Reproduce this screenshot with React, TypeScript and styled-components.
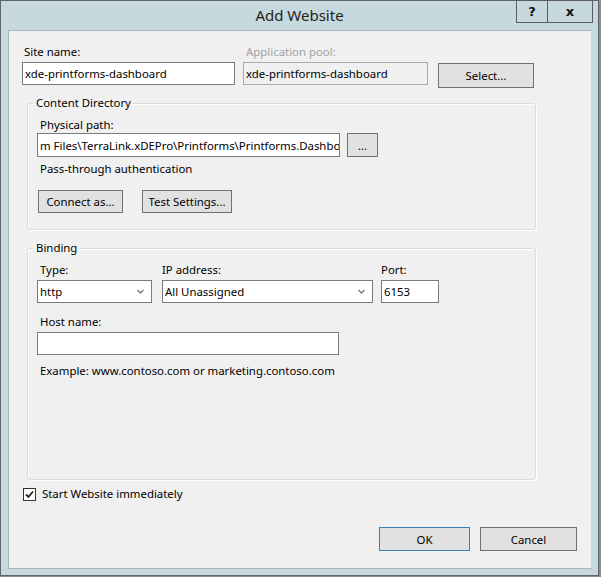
import React from 'react';
import styled, { createGlobalStyle } from 'styled-components';

const GlobalStyle = createGlobalStyle`
  html, body {
    margin: 0;
    padding: 0;
    background: #8c8c8c;
  }
  body {
    font-family: "Noto Sans", "Open Sans", sans-serif;
    font-size: 11.4px;
    color: #000;
  }
`;

const Window = styled.div`
  width: 597px;
  height: 574px;
  border: 1px solid #5f6569;
  background: #c6d9de;
  display: flex;
  flex-direction: column;
`;

const TitleBar = styled.div`
  height: 29px;
  display: grid;
  grid-template-columns: 1fr auto 1fr;
  align-items: start;
`;

const Title = styled.div`
  font-size: 15px;
  line-height: 29px;
  color: #1e1e1e;
`;

const CaptionButtons = styled.div`
  justify-self: end;
  display: flex;
  margin-right: 5px;
  margin-top: -1px;
`;

const CaptionButton = styled.div<{ $w: number }>`
  width: ${(p) => p.$w}px;
  height: 21px;
  border: 1px solid #5a5e61;
  border-left-width: ${(p) => (p.$w > 35 ? 0 : 1)}px;
  display: flex;
  align-items: center;
  justify-content: center;
  font-family: "DejaVu Sans", sans-serif;
  font-weight: bold;
  font-size: 13px;
  color: #111;
`;

const Panel = styled.div`
  flex: 1;
  margin: 0 6px 6px 7px;
  background: #f0f0f0;
  border: 1px solid #a7b7bd;
  border-right-color: #c6d9de;
  padding: 13px 14px 0 13px;
  display: flex;
  flex-direction: column;
`;

const Row = styled.div<{ $gap?: number }>`
  display: flex;
  align-items: flex-start;
  gap: ${(p) => p.$gap ?? 8}px;
`;

const Field = styled.div<{ $w: number }>`
  width: ${(p) => p.$w}px;
  display: flex;
  flex-direction: column;
`;

const Label = styled.div<{ $indent?: number; $muted?: boolean }>`
  line-height: 16px;
  padding-left: ${(p) => p.$indent ?? 3}px;
  color: ${(p) => (p.$muted ? '#a3a3a3' : '#000')};
  white-space: nowrap;
`;

const TextBox = styled.div<{ $h?: number; $disabled?: boolean; $mt?: number }>`
  box-sizing: border-box;
  height: ${(p) => p.$h ?? 23}px;
  margin-top: ${(p) => p.$mt ?? 2}px;
  border: 1px solid ${(p) => (p.$disabled ? '#a9a9a9' : '#7a7a7a')};
  background: ${(p) => (p.$disabled ? '#f0f0f0' : '#fff')};
  padding: 0 2px;
  display: flex;
  align-items: center;
  white-space: nowrap;
  overflow: hidden;
`;

const Select = styled(TextBox)`
  justify-content: space-between;
  padding-right: 7px;
`;

const Chevron = () => (
  <svg width="7" height="5" viewBox="0 0 7 5">
    <path d="M0.5 1 L3.5 4 L6.5 1" fill="none" stroke="#777" strokeWidth="1.3" />
  </svg>
);

const Button = styled.div<{ $w: number; $h?: number; $default?: boolean; $mt?: number }>`
  box-sizing: border-box;
  width: ${(p) => p.$w}px;
  height: ${(p) => p.$h ?? 24}px;
  margin-top: ${(p) => p.$mt ?? 0}px;
  background: #e1e1e1;
  border: 1px solid ${(p) => (p.$default ? '#3c7fb1' : '#707070')};
  display: flex;
  align-items: center;
  justify-content: center;
  white-space: nowrap;
`;

const Group = styled.fieldset<{ $h: number; $mt: number }>`
  box-sizing: border-box;
  margin: ${(p) => p.$mt}px 0 0 5px;
  width: 509px;
  height: ${(p) => p.$h}px;
  border: 1px solid #dcdcdc;
  border-radius: 3px;
  box-shadow: inset 1px 1px 0 #fff, 1px 1px 0 #fff;
  padding: 0 0 0 9px;
  min-inline-size: 0;
`;

const Legend = styled.legend`
  padding: 0 2px 0 3px;
  margin-left: -4px;
  line-height: 16px;
`;

const Text = styled.div<{ $mt: number }>`
  margin-top: ${(p) => p.$mt}px;
  line-height: 16px;
  padding-left: 3px;
`;

const CheckRow = styled.label`
  display: flex;
  align-items: center;
  gap: 6px;
  margin: 6px 0 0 1px;
  line-height: 16px;
`;

const CheckBox = styled.span`
  box-sizing: border-box;
  width: 13px;
  height: 13px;
  border: 1px solid #333;
  background: #fff;
  display: flex;
  align-items: center;
  justify-content: center;
`;

const Footer = styled.div`
  display: flex;
  justify-content: flex-end;
  gap: 10px;
  margin-top: 25px;
`;

export default function App() {
  return (
    <>
      <GlobalStyle />
      <Window>
        <TitleBar>
          <div />
          <Title>Add Website</Title>
          <CaptionButtons>
            <CaptionButton $w={30}>?</CaptionButton>
            <CaptionButton $w={44}>x</CaptionButton>
          </CaptionButtons>
        </TitleBar>
        <Panel>
          <Row>
            <Field $w={213}>
              <Label $indent={2}>Site name:</Label>
              <TextBox>xde-printforms-dashboard</TextBox>
            </Field>
            <Field $w={185}>
              <Label $muted>Application pool:</Label>
              <TextBox $disabled>xde-printforms-dashboard</TextBox>
            </Field>
            <Button $w={96} $h={25} $mt={19} style={{ marginLeft: 2 }}>
              Select...
            </Button>
          </Row>

          <Group $h={135} $mt={7}>
            <Legend>Content Directory</Legend>
            <Field $w={343} style={{ marginTop: 6 }}>
              <Label>Physical path:</Label>
            </Field>
            <Row $gap={7}>
              <TextBox $h={24} $mt={0} style={{ width: 303 }}>
                m Files\TerraLink.xDEPro\Printforms\Printforms.Dashboard
              </TextBox>
              <Button $w={31} $mt={0}>...</Button>
            </Row>
            <Text $mt={4}>Pass-through authentication</Text>
            <Row $gap={19} style={{ marginTop: 13 }}>
              <Button $w={85} $h={23} style={{ marginLeft: 1 }}>Connect as...</Button>
              <Button $w={90} $h={23}>Test Settings...</Button>
            </Row>
          </Group>

          <Group $h={240} $mt={10}>
            <Legend>Binding</Legend>
            <Row style={{ marginTop: 6 }} $gap={10}>
              <Field $w={115}>
                <Label>Type:</Label>
                <Select $h={23} $mt={2}>
                  <span>http</span>
                  <Chevron />
                </Select>
              </Field>
              <Field $w={211}>
                <Label $indent={0}>IP address:</Label>
                <Select $h={23} $mt={2}>
                  <span>All Unassigned</span>
                  <Chevron />
                </Select>
              </Field>
              <Field $w={58} style={{ marginLeft: -2 }}>
                <Label $indent={0}>Port:</Label>
                <TextBox $h={23} $mt={2}>6153</TextBox>
              </Field>
            </Row>
            <Field $w={302} style={{ marginTop: 11 }}>
              <Label>Host name:</Label>
              <TextBox $h={23} $mt={2} />
            </Field>
            <Text $mt={8}>Example: www.contoso.com or marketing.contoso.com</Text>
          </Group>

          <CheckRow>
            <CheckBox>
              <svg width="9" height="9" viewBox="0 0 9 9">
                <path d="M1 4.5 L3.5 7 L8 1.5" fill="none" stroke="#222" strokeWidth="1.8" />
              </svg>
            </CheckBox>
            Start Website immediately
          </CheckRow>

          <Footer>
            <Button $w={91} $default>OK</Button>
            <Button $w={97}>Cancel</Button>
          </Footer>
        </Panel>
      </Window>
    </>
  );
}
